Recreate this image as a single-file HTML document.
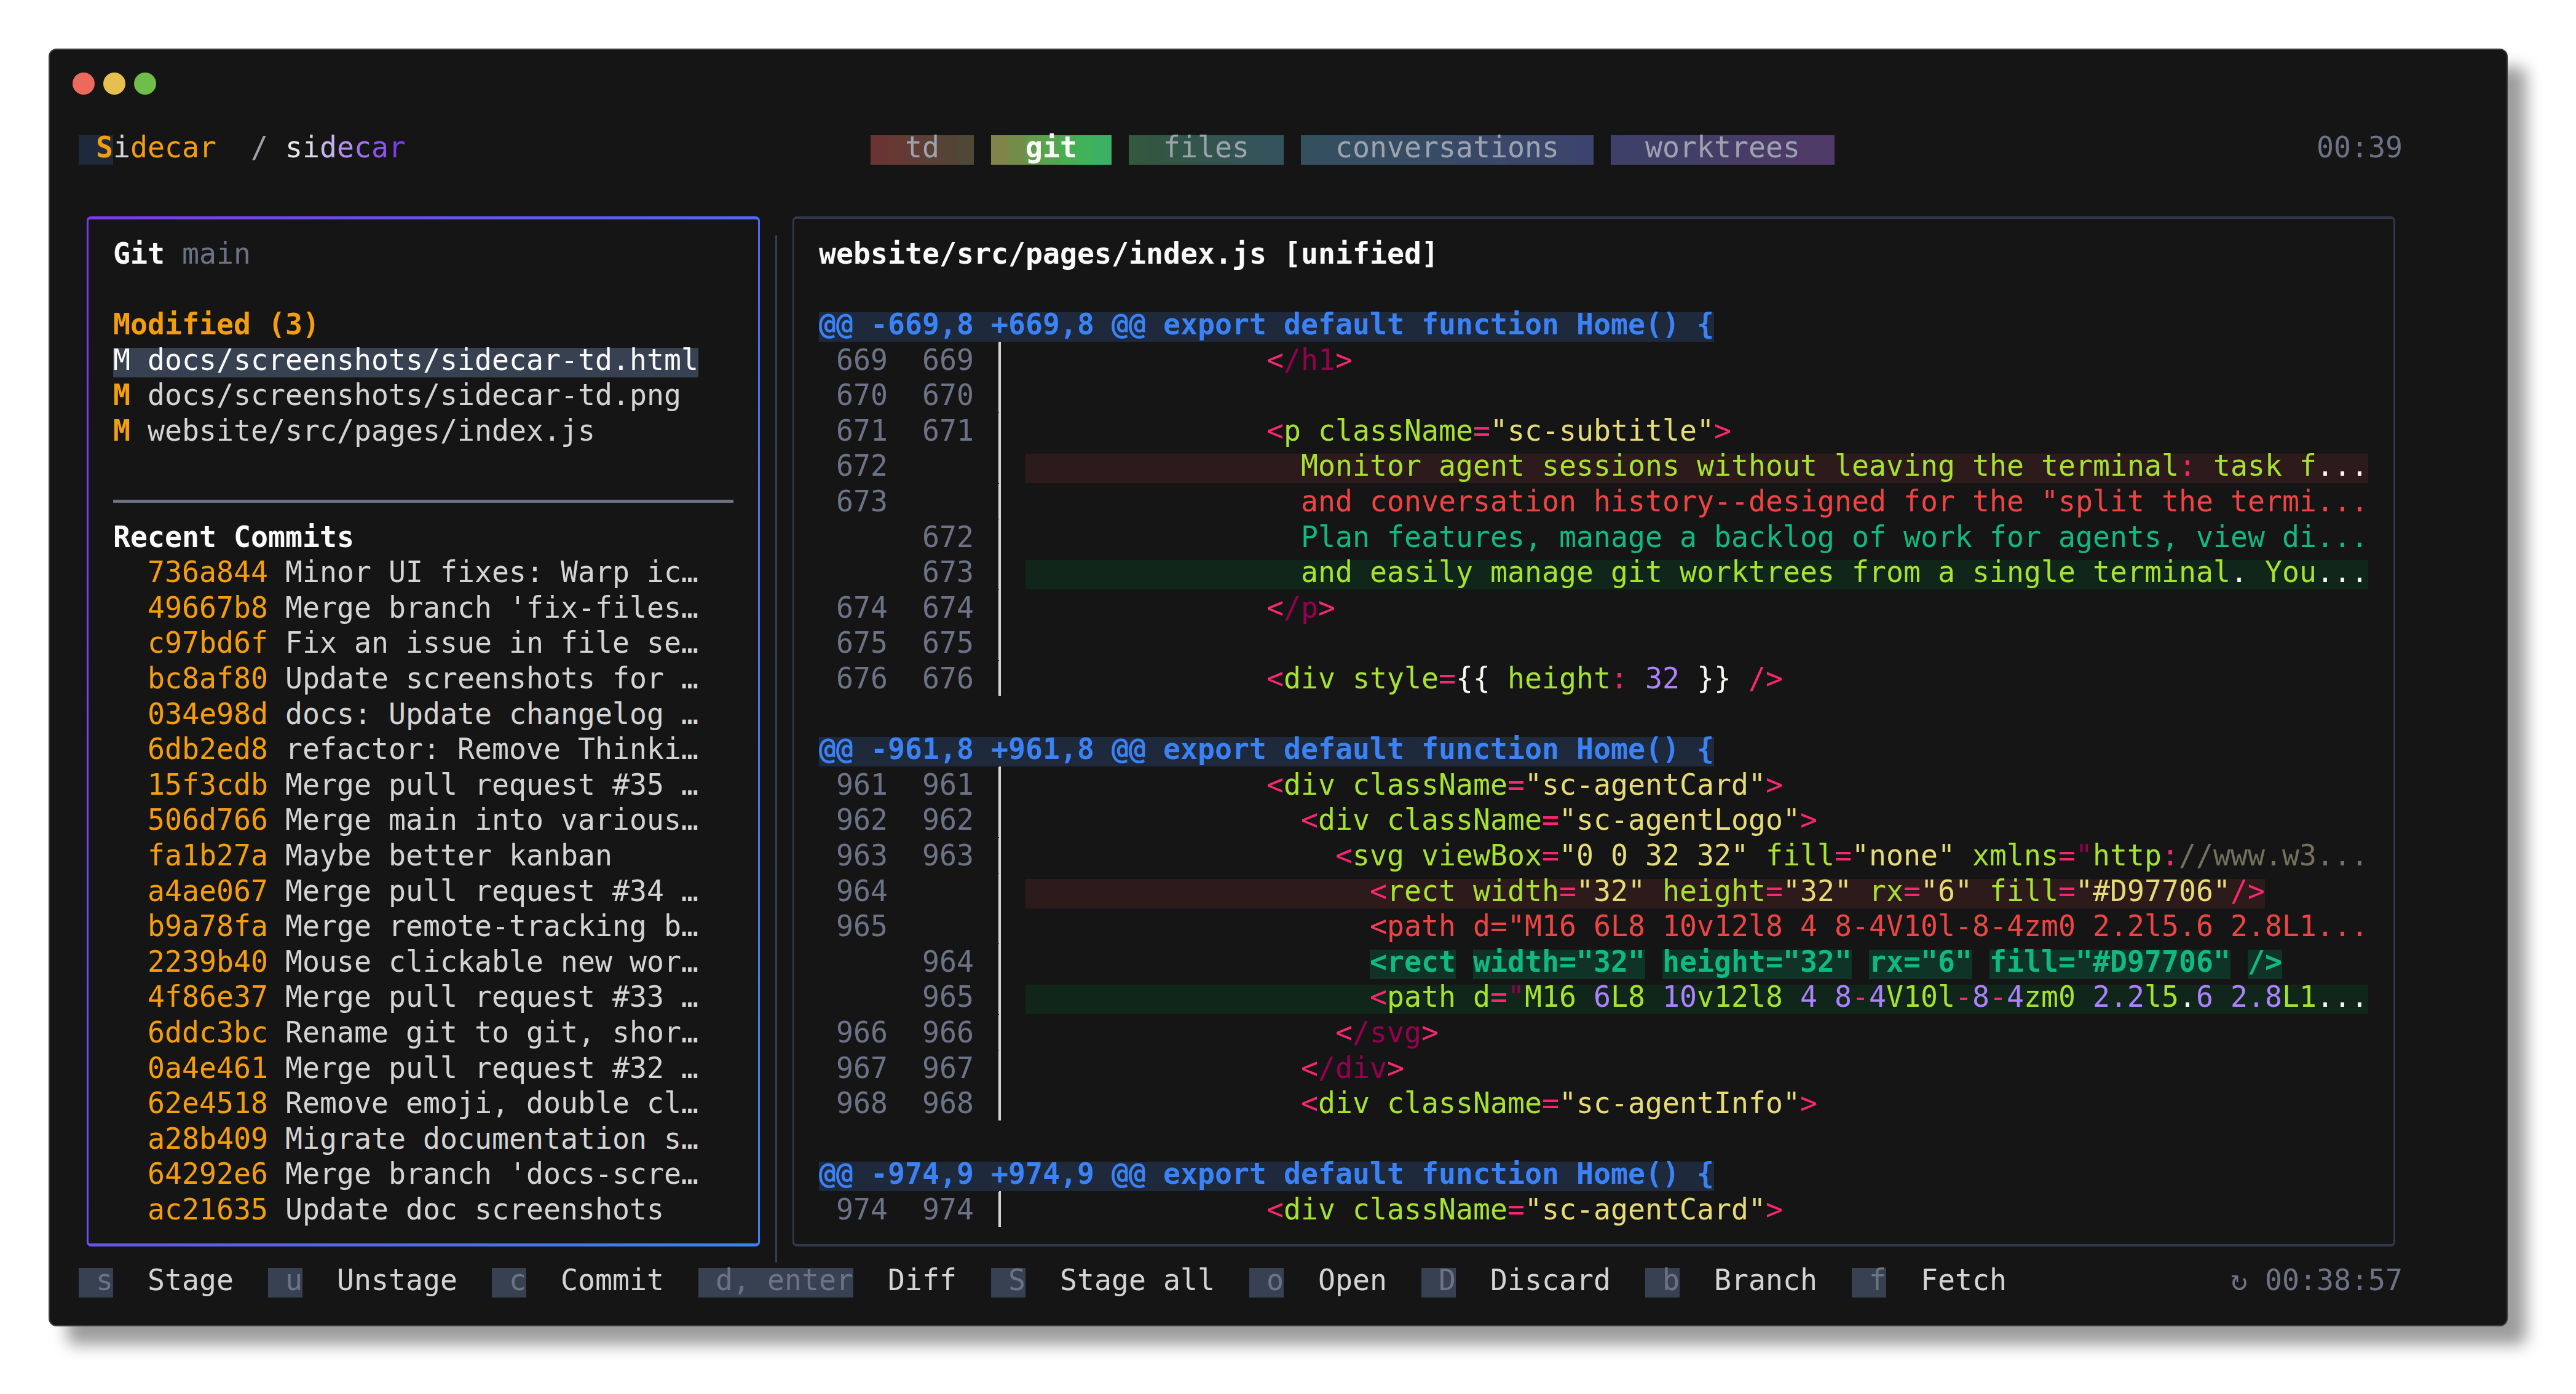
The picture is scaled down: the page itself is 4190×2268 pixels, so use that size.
<!DOCTYPE html>
<html lang="en"><head><meta charset="utf-8"><title>Sidecar — git</title>
<style>
html,body{margin:0;padding:0}
body{width:4190px;height:2268px;background:#fff;position:relative;overflow:hidden;
 font-family:"DejaVu Sans Mono","Liberation Mono",monospace;font-size:48px;color:#d4d4d4;
 -webkit-font-smoothing:antialiased}
.win{position:absolute;left:79px;top:79px;width:4000px;height:2079px;box-sizing:border-box;background:#151515;
 border:2px solid #3a3a3a;border-radius:13px;box-shadow:30px 30px 26px rgba(0,0,0,.39)}
.dot{position:absolute;top:118px;width:36px;height:36px;border-radius:50%}
.r{position:absolute;left:0;height:57.6px;line-height:57.6px;white-space:pre;transform:scaleX(0.96891);transform-origin:0 0}
.r span{position:absolute;top:0;display:block}
.r b{position:absolute;top:0;display:block;font-weight:bold}
i{position:absolute;display:block;height:48px}
.ln{position:absolute;display:block}
.lp{position:absolute;left:140.5px;top:352.05px;width:1095.8px;height:1675.85px;box-sizing:border-box;border-radius:7px;
 background:linear-gradient(110.7deg,#7c3aed,#3b82f6);}
.lp::after{content:"";position:absolute;left:3.7px;top:4.8px;right:3.7px;bottom:4.8px;background:#151515;border-radius:3px}
.rp{position:absolute;left:1288.8px;top:352.05px;width:2607.3px;height:1675.85px;box-sizing:border-box;border-radius:7px;
 border:solid #2f394b;border-width:4.8px 3.6px}
</style></head><body>
<div class="win"></div>
<div class="dot" style="left:118px;background:#ed695e"></div>
<div class="dot" style="left:168px;background:#e5c04f"></div>
<div class="dot" style="left:218px;background:#70be49"></div>
<div class="lp"></div>
<div class="rp"></div>

<div class="ln" style="left:1260.6px;top:383.2px;width:3.6px;height:1670.4px;background:#374151"></div>
<div class="ln" style="left:184px;top:813.3px;width:1009px;height:4.5px;background:#6b7280"></div>
<div class="ln" style="left:1624.6px;top:556px;width:3.7px;height:576px;background:#d4d4d4"></div>
<div class="ln" style="left:1624.6px;top:1247.2px;width:3.7px;height:576px;background:#d4d4d4"></div>
<div class="ln" style="left:1624.6px;top:1938.4px;width:3.7px;height:57.6px;background:#d4d4d4"></div>
<i style="left:128px;top:220px;width:56px;background:#1e293b"></i>
<i style="left:1416px;top:220px;width:28px;background:#6b3434"></i>
<i style="left:1444px;top:220px;width:28px;background:#653834"></i>
<i style="left:1472px;top:220px;width:28px;background:#603c35"></i>
<i style="left:1500px;top:220px;width:28px;background:#5a4035"></i>
<i style="left:1528px;top:220px;width:28px;background:#554436"></i>
<i style="left:1556px;top:220px;width:28px;background:#4f4836"></i>
<i style="left:1612px;top:220px;width:28px;background:#7f8548"></i>
<i style="left:1640px;top:220px;width:28px;background:#738c49"></i>
<i style="left:1668px;top:220px;width:28px;background:#65994b"></i>
<i style="left:1696px;top:220px;width:28px;background:#55a44e"></i>
<i style="left:1724px;top:220px;width:28px;background:#47ae52"></i>
<i style="left:1752px;top:220px;width:28px;background:#40b259"></i>
<i style="left:1780px;top:220px;width:28px;background:#3cb064"></i>
<i style="left:1836px;top:220px;width:28px;background:#33573f"></i>
<i style="left:1864px;top:220px;width:28px;background:#335643"></i>
<i style="left:1892px;top:220px;width:28px;background:#335646"></i>
<i style="left:1920px;top:220px;width:28px;background:#33564a"></i>
<i style="left:1948px;top:220px;width:28px;background:#34554e"></i>
<i style="left:1976px;top:220px;width:28px;background:#345452"></i>
<i style="left:2004px;top:220px;width:28px;background:#345456"></i>
<i style="left:2032px;top:220px;width:28px;background:#345459"></i>
<i style="left:2060px;top:220px;width:28px;background:#34535d"></i>
<i style="left:2116px;top:220px;width:28px;background:#34505f"></i>
<i style="left:2144px;top:220px;width:28px;background:#344f60"></i>
<i style="left:2172px;top:220px;width:28px;background:#354e61"></i>
<i style="left:2200px;top:220px;width:28px;background:#364e62"></i>
<i style="left:2228px;top:220px;width:28px;background:#364d62"></i>
<i style="left:2256px;top:220px;width:28px;background:#364c63"></i>
<i style="left:2284px;top:220px;width:28px;background:#374c64"></i>
<i style="left:2312px;top:220px;width:28px;background:#384b65"></i>
<i style="left:2340px;top:220px;width:28px;background:#384a66"></i>
<i style="left:2368px;top:220px;width:28px;background:#384967"></i>
<i style="left:2396px;top:220px;width:28px;background:#394868"></i>
<i style="left:2424px;top:220px;width:28px;background:#3a4869"></i>
<i style="left:2452px;top:220px;width:28px;background:#3a476a"></i>
<i style="left:2480px;top:220px;width:28px;background:#3a466a"></i>
<i style="left:2508px;top:220px;width:28px;background:#3b466b"></i>
<i style="left:2536px;top:220px;width:28px;background:#3c456c"></i>
<i style="left:2564px;top:220px;width:28px;background:#3c446d"></i>
<i style="left:2620px;top:220px;width:28px;background:#3d4068"></i>
<i style="left:2648px;top:220px;width:28px;background:#3e4068"></i>
<i style="left:2676px;top:220px;width:28px;background:#403f68"></i>
<i style="left:2704px;top:220px;width:28px;background:#413e68"></i>
<i style="left:2732px;top:220px;width:28px;background:#433e67"></i>
<i style="left:2760px;top:220px;width:28px;background:#443e67"></i>
<i style="left:2788px;top:220px;width:28px;background:#463d67"></i>
<i style="left:2816px;top:220px;width:28px;background:#473c67"></i>
<i style="left:2844px;top:220px;width:28px;background:#483c67"></i>
<i style="left:2872px;top:220px;width:28px;background:#4a3c66"></i>
<i style="left:2900px;top:220px;width:28px;background:#4b3b66"></i>
<i style="left:2928px;top:220px;width:28px;background:#4d3a66"></i>
<i style="left:2956px;top:220px;width:28px;background:#4e3a66"></i>
<i style="left:184px;top:565.6px;width:952px;background:#374151"></i>
<i style="left:1332px;top:508px;width:1456px;background:#1e293b"></i>
<i style="left:1668px;top:738.4px;width:2184px;background:#2d1a1a"></i>
<i style="left:1668px;top:911.2px;width:2184px;background:#10261a"></i>
<i style="left:1332px;top:1199.2px;width:1456px;background:#1e293b"></i>
<i style="left:1668px;top:1429.6px;width:2016px;background:#2d1a1a"></i>
<i style="left:2228px;top:1544.8px;width:140px;background:#0f3326"></i>
<i style="left:2396px;top:1544.8px;width:280px;background:#0f3326"></i>
<i style="left:2704px;top:1544.8px;width:308px;background:#0f3326"></i>
<i style="left:3040px;top:1544.8px;width:168px;background:#0f3326"></i>
<i style="left:3236px;top:1544.8px;width:392px;background:#0f3326"></i>
<i style="left:3656px;top:1544.8px;width:56px;background:#0f3326"></i>
<i style="left:1668px;top:1602.4px;width:2184px;background:#10261a"></i>
<i style="left:1332px;top:1890.4px;width:1456px;background:#1e293b"></i>
<i style="left:128px;top:2063.2px;width:56px;background:#374151"></i>
<i style="left:436px;top:2063.2px;width:56px;background:#374151"></i>
<i style="left:800px;top:2063.2px;width:56px;background:#374151"></i>
<i style="left:1136px;top:2063.2px;width:252px;background:#374151"></i>
<i style="left:1612px;top:2063.2px;width:56px;background:#374151"></i>
<i style="left:2032px;top:2063.2px;width:56px;background:#374151"></i>
<i style="left:2312px;top:2063.2px;width:56px;background:#374151"></i>
<i style="left:2676px;top:2063.2px;width:56px;background:#374151"></i>
<i style="left:3012px;top:2063.2px;width:56px;background:#374151"></i>
<div class="r" style="top:210.9px"><span style="left:132.11px;color:#d4d4d4"> </span><b style="left:161.01px;color:#f59e0b">S</b><span style="left:189.9px;color:#d4d4d4">i</span><span style="left:218.8px;color:#f59e0b">decar</span><span style="left:363.29px;color:#d4d4d4">  </span><span style="left:421.09px;color:#9ca3af">/</span><span style="left:449.99px;color:#d4d4d4"> </span><span style="left:478.89px;color:#e8e8e8">s</span><span style="left:507.79px;color:#ded8ea">i</span><span style="left:536.69px;color:#c6b2ea">d</span><span style="left:565.58px;color:#b190ec">e</span><span style="left:594.48px;color:#9f72ee">c</span><span style="left:623.38px;color:#8d55ee">a</span><span style="left:652.28px;color:#7c3aed">r</span><span style="left:1461.44px;color:#9ca3af">  td  </span><b style="left:1663.73px;color:#fafafa">  git  </b><span style="left:1894.91px;color:#9ca3af">  files  </span><span style="left:2183.9px;color:#9ca3af">  conversations  </span><span style="left:2704.07px;color:#9ca3af">  worktrees  </span><span style="left:3888.91px;color:#6d7387">00:39</span></div>
<div class="r" style="top:383.7px"><b style="left:189.9px;color:#fafafa">Git</b><span style="left:276.6px;color:#d4d4d4"> </span><span style="left:305.5px;color:#6d7387">main</span><b style="left:1374.74px;color:#fafafa">website/src/pages/index.js [unified]</b></div>
<div class="r" style="top:498.9px"><b style="left:189.9px;color:#f59e0b">Modified (3)</b><b style="left:1374.74px;color:#3b82f6">@@ -669,8 +669,8 @@ export default function Home() {</b></div>
<div class="r" style="top:556.5px"><span style="left:189.9px;color:#f9fafb">M docs/screenshots/sidecar-td.html</span><span style="left:1403.64px;color:#6d7387">669</span><span style="left:1548.13px;color:#6d7387">669</span><span style="left:1663.73px;color:#d4d4d4">│</span><span style="left:2126.1px;color:#f92672">&lt;</span><span style="left:2155px;color:#960050">/h1</span><span style="left:2241.69px;color:#f92672">&gt;</span></div>
<div class="r" style="top:614.1px"><b style="left:189.9px;color:#f59e0b">M</b><span style="left:218.8px;color:#d4d4d4"> docs/screenshots/sidecar-td.png</span><span style="left:1403.64px;color:#6d7387">670</span><span style="left:1548.13px;color:#6d7387">670</span><span style="left:1663.73px;color:#d4d4d4">│</span></div>
<div class="r" style="top:671.7px"><b style="left:189.9px;color:#f59e0b">M</b><span style="left:218.8px;color:#d4d4d4"> website/src/pages/index.js</span><span style="left:1403.64px;color:#6d7387">671</span><span style="left:1548.13px;color:#6d7387">671</span><span style="left:1663.73px;color:#d4d4d4">│</span><span style="left:2126.1px;color:#f92672">&lt;</span><span style="left:2155px;color:#a6e22e">p className</span><span style="left:2472.88px;color:#f92672">=</span><span style="left:2501.78px;color:#e6db74">"sc-subtitle"</span><span style="left:2877.46px;color:#f92672">&gt;</span></div>
<div class="r" style="top:729.3px"><span style="left:1403.64px;color:#6d7387">672</span><span style="left:1663.73px;color:#d4d4d4">│</span><span style="left:2183.9px;color:#a6e22e">Monitor agent sessions without leaving the terminal</span><span style="left:3657.72px;color:#f92672">:</span><span style="left:3686.62px;color:#a6e22e"> task f</span><span style="left:3888.91px;color:#f8f8f2">...</span></div>
<div class="r" style="top:786.9px"><span style="left:1403.64px;color:#6d7387">673</span><span style="left:1663.73px;color:#d4d4d4">│</span><span style="left:2183.9px;color:#ef4444">and conversation history--designed for the "split the termi...</span></div>
<div class="r" style="top:844.5px"><b style="left:189.9px;color:#fafafa">Recent Commits</b><span style="left:1548.13px;color:#6d7387">672</span><span style="left:1663.73px;color:#d4d4d4">│</span><span style="left:2183.9px;color:#10b981">Plan features, manage a backlog of work for agents, view di...</span></div>
<div class="r" style="top:902.1px"><span style="left:247.7px;color:#f59e0b">736a844</span><span style="left:449.99px;color:#d4d4d4"> </span><span style="left:478.89px;color:#d4d4d4">Minor UI fixes: Warp ic…</span><span style="left:1548.13px;color:#6d7387">673</span><span style="left:1663.73px;color:#d4d4d4">│</span><span style="left:2183.9px;color:#a6e22e">and easily manage git worktrees from a single terminal</span><span style="left:3744.41px;color:#f8f8f2">.</span><span style="left:3773.31px;color:#a6e22e"> You</span><span style="left:3888.91px;color:#f8f8f2">...</span></div>
<div class="r" style="top:959.7px"><span style="left:247.7px;color:#f59e0b">49667b8</span><span style="left:449.99px;color:#d4d4d4"> </span><span style="left:478.89px;color:#d4d4d4">Merge branch 'fix-files…</span><span style="left:1403.64px;color:#6d7387">674</span><span style="left:1548.13px;color:#6d7387">674</span><span style="left:1663.73px;color:#d4d4d4">│</span><span style="left:2126.1px;color:#f92672">&lt;</span><span style="left:2155px;color:#960050">/p</span><span style="left:2212.8px;color:#f92672">&gt;</span></div>
<div class="r" style="top:1017.3px"><span style="left:247.7px;color:#f59e0b">c97bd6f</span><span style="left:449.99px;color:#d4d4d4"> </span><span style="left:478.89px;color:#d4d4d4">Fix an issue in file se…</span><span style="left:1403.64px;color:#6d7387">675</span><span style="left:1548.13px;color:#6d7387">675</span><span style="left:1663.73px;color:#d4d4d4">│</span></div>
<div class="r" style="top:1074.9px"><span style="left:247.7px;color:#f59e0b">bc8af80</span><span style="left:449.99px;color:#d4d4d4"> </span><span style="left:478.89px;color:#d4d4d4">Update screenshots for …</span><span style="left:1403.64px;color:#6d7387">676</span><span style="left:1548.13px;color:#6d7387">676</span><span style="left:1663.73px;color:#d4d4d4">│</span><span style="left:2126.1px;color:#f92672">&lt;</span><span style="left:2155px;color:#a6e22e">div style</span><span style="left:2415.08px;color:#f92672">=</span><span style="left:2443.98px;color:#f8f8f2">{{</span><span style="left:2501.78px;color:#a6e22e"> height</span><span style="left:2704.07px;color:#f92672">:</span><span style="left:2732.97px;color:#ae81ff"> 32</span><span style="left:2819.66px;color:#f8f8f2"> }}</span><span style="left:2906.36px;color:#f92672"> /</span><span style="left:2964.16px;color:#f92672">&gt;</span></div>
<div class="r" style="top:1132.5px"><span style="left:247.7px;color:#f59e0b">034e98d</span><span style="left:449.99px;color:#d4d4d4"> </span><span style="left:478.89px;color:#d4d4d4">docs: Update changelog …</span></div>
<div class="r" style="top:1190.1px"><span style="left:247.7px;color:#f59e0b">6db2ed8</span><span style="left:449.99px;color:#d4d4d4"> </span><span style="left:478.89px;color:#d4d4d4">refactor: Remove Thinki…</span><b style="left:1374.74px;color:#3b82f6">@@ -961,8 +961,8 @@ export default function Home() {</b></div>
<div class="r" style="top:1247.7px"><span style="left:247.7px;color:#f59e0b">15f3cdb</span><span style="left:449.99px;color:#d4d4d4"> </span><span style="left:478.89px;color:#d4d4d4">Merge pull request #35 …</span><span style="left:1403.64px;color:#6d7387">961</span><span style="left:1548.13px;color:#6d7387">961</span><span style="left:1663.73px;color:#d4d4d4">│</span><span style="left:2126.1px;color:#f92672">&lt;</span><span style="left:2155px;color:#a6e22e">div className</span><span style="left:2530.68px;color:#f92672">=</span><span style="left:2559.58px;color:#e6db74">"sc-agentCard"</span><span style="left:2964.16px;color:#f92672">&gt;</span></div>
<div class="r" style="top:1305.3px"><span style="left:247.7px;color:#f59e0b">506d766</span><span style="left:449.99px;color:#d4d4d4"> </span><span style="left:478.89px;color:#d4d4d4">Merge main into various…</span><span style="left:1403.64px;color:#6d7387">962</span><span style="left:1548.13px;color:#6d7387">962</span><span style="left:1663.73px;color:#d4d4d4">│</span><span style="left:2183.9px;color:#f92672">&lt;</span><span style="left:2212.8px;color:#a6e22e">div className</span><span style="left:2588.48px;color:#f92672">=</span><span style="left:2617.37px;color:#e6db74">"sc-agentLogo"</span><span style="left:3021.95px;color:#f92672">&gt;</span></div>
<div class="r" style="top:1362.9px"><span style="left:247.7px;color:#f59e0b">fa1b27a</span><span style="left:449.99px;color:#d4d4d4"> </span><span style="left:478.89px;color:#d4d4d4">Maybe better kanban</span><span style="left:1403.64px;color:#6d7387">963</span><span style="left:1548.13px;color:#6d7387">963</span><span style="left:1663.73px;color:#d4d4d4">│</span><span style="left:2241.69px;color:#f92672">&lt;</span><span style="left:2270.59px;color:#a6e22e">svg viewBox</span><span style="left:2588.48px;color:#f92672">=</span><span style="left:2617.37px;color:#e6db74">"0 0 32 32"</span><span style="left:2935.26px;color:#a6e22e"> fill</span><span style="left:3079.75px;color:#f92672">=</span><span style="left:3108.65px;color:#e6db74">"none"</span><span style="left:3282.04px;color:#a6e22e"> xmlns</span><span style="left:3455.43px;color:#f92672">=</span><span style="left:3484.33px;color:#960050">"</span><span style="left:3513.23px;color:#a6e22e">http</span><span style="left:3628.82px;color:#f92672">:</span><span style="left:3657.72px;color:#75715e">//www.w3...</span></div>
<div class="r" style="top:1420.5px"><span style="left:247.7px;color:#f59e0b">a4ae067</span><span style="left:449.99px;color:#d4d4d4"> </span><span style="left:478.89px;color:#d4d4d4">Merge pull request #34 …</span><span style="left:1403.64px;color:#6d7387">964</span><span style="left:1663.73px;color:#d4d4d4">│</span><span style="left:2299.49px;color:#f92672">&lt;</span><span style="left:2328.39px;color:#a6e22e">rect width</span><span style="left:2617.37px;color:#f92672">=</span><span style="left:2646.27px;color:#e6db74">"32"</span><span style="left:2761.87px;color:#a6e22e"> height</span><span style="left:2964.16px;color:#f92672">=</span><span style="left:2993.05px;color:#e6db74">"32"</span><span style="left:3108.65px;color:#a6e22e"> rx</span><span style="left:3195.34px;color:#f92672">=</span><span style="left:3224.24px;color:#e6db74">"6"</span><span style="left:3310.94px;color:#a6e22e"> fill</span><span style="left:3455.43px;color:#f92672">=</span><span style="left:3484.33px;color:#e6db74">"#D97706"</span><span style="left:3744.41px;color:#f92672">/</span><span style="left:3773.31px;color:#f92672">&gt;</span></div>
<div class="r" style="top:1478.1px"><span style="left:247.7px;color:#f59e0b">b9a78fa</span><span style="left:449.99px;color:#d4d4d4"> </span><span style="left:478.89px;color:#d4d4d4">Merge remote-tracking b…</span><span style="left:1403.64px;color:#6d7387">965</span><span style="left:1663.73px;color:#d4d4d4">│</span><span style="left:2299.49px;color:#f43f5e">&lt;</span><span style="left:2328.39px;color:#ef4444">path d="M16 6L8 10v12l8 4 8-4V10l-8-4zm0 2.2l5.6 2.8L1...</span></div>
<div class="r" style="top:1535.7px"><span style="left:247.7px;color:#f59e0b">2239b40</span><span style="left:449.99px;color:#d4d4d4"> </span><span style="left:478.89px;color:#d4d4d4">Mouse clickable new wor…</span><span style="left:1548.13px;color:#6d7387">964</span><span style="left:1663.73px;color:#d4d4d4">│</span><b style="left:2299.49px;color:#10b981">&lt;rect</b><b style="left:2472.88px;color:#10b981">width="32"</b><b style="left:2790.76px;color:#10b981">height="32"</b><b style="left:3137.55px;color:#10b981">rx="6"</b><b style="left:3339.84px;color:#10b981">fill="#D97706"</b><b style="left:3773.31px;color:#10b981">/&gt;</b></div>
<div class="r" style="top:1593.3px"><span style="left:247.7px;color:#f59e0b">4f86e37</span><span style="left:449.99px;color:#d4d4d4"> </span><span style="left:478.89px;color:#d4d4d4">Merge pull request #33 …</span><span style="left:1548.13px;color:#6d7387">965</span><span style="left:1663.73px;color:#d4d4d4">│</span><span style="left:2299.49px;color:#f92672">&lt;</span><span style="left:2328.39px;color:#a6e22e">path d</span><span style="left:2501.78px;color:#f92672">=</span><span style="left:2530.68px;color:#960050">"</span><span style="left:2559.58px;color:#a6e22e">M16</span><span style="left:2646.27px;color:#ae81ff"> 6</span><span style="left:2704.07px;color:#a6e22e">L8</span><span style="left:2761.87px;color:#ae81ff"> 10</span><span style="left:2848.56px;color:#a6e22e">v12l8</span><span style="left:2993.05px;color:#ae81ff"> 4 8</span><span style="left:3108.65px;color:#f92672">-</span><span style="left:3137.55px;color:#ae81ff">4</span><span style="left:3166.44px;color:#a6e22e">V10l</span><span style="left:3282.04px;color:#f92672">-</span><span style="left:3310.94px;color:#ae81ff">8</span><span style="left:3339.84px;color:#f92672">-</span><span style="left:3368.73px;color:#ae81ff">4</span><span style="left:3397.63px;color:#a6e22e">zm0</span><span style="left:3484.33px;color:#ae81ff"> 2.2</span><span style="left:3599.92px;color:#a6e22e">l5</span><span style="left:3657.72px;color:#f8f8f2">.</span><span style="left:3686.62px;color:#ae81ff">6 2.8</span><span style="left:3831.11px;color:#a6e22e">L1</span><span style="left:3888.91px;color:#f8f8f2">...</span></div>
<div class="r" style="top:1650.9px"><span style="left:247.7px;color:#f59e0b">6ddc3bc</span><span style="left:449.99px;color:#d4d4d4"> </span><span style="left:478.89px;color:#d4d4d4">Rename git to git, shor…</span><span style="left:1403.64px;color:#6d7387">966</span><span style="left:1548.13px;color:#6d7387">966</span><span style="left:1663.73px;color:#d4d4d4">│</span><span style="left:2241.69px;color:#f92672">&lt;</span><span style="left:2270.59px;color:#960050">/svg</span><span style="left:2386.19px;color:#f92672">&gt;</span></div>
<div class="r" style="top:1708.5px"><span style="left:247.7px;color:#f59e0b">0a4e461</span><span style="left:449.99px;color:#d4d4d4"> </span><span style="left:478.89px;color:#d4d4d4">Merge pull request #32 …</span><span style="left:1403.64px;color:#6d7387">967</span><span style="left:1548.13px;color:#6d7387">967</span><span style="left:1663.73px;color:#d4d4d4">│</span><span style="left:2183.9px;color:#f92672">&lt;</span><span style="left:2212.8px;color:#960050">/div</span><span style="left:2328.39px;color:#f92672">&gt;</span></div>
<div class="r" style="top:1766.1px"><span style="left:247.7px;color:#f59e0b">62e4518</span><span style="left:449.99px;color:#d4d4d4"> </span><span style="left:478.89px;color:#d4d4d4">Remove emoji, double cl…</span><span style="left:1403.64px;color:#6d7387">968</span><span style="left:1548.13px;color:#6d7387">968</span><span style="left:1663.73px;color:#d4d4d4">│</span><span style="left:2183.9px;color:#f92672">&lt;</span><span style="left:2212.8px;color:#a6e22e">div className</span><span style="left:2588.48px;color:#f92672">=</span><span style="left:2617.37px;color:#e6db74">"sc-agentInfo"</span><span style="left:3021.95px;color:#f92672">&gt;</span></div>
<div class="r" style="top:1823.7px"><span style="left:247.7px;color:#f59e0b">a28b409</span><span style="left:449.99px;color:#d4d4d4"> </span><span style="left:478.89px;color:#d4d4d4">Migrate documentation s…</span></div>
<div class="r" style="top:1881.3px"><span style="left:247.7px;color:#f59e0b">64292e6</span><span style="left:449.99px;color:#d4d4d4"> </span><span style="left:478.89px;color:#d4d4d4">Merge branch 'docs-scre…</span><b style="left:1374.74px;color:#3b82f6">@@ -974,9 +974,9 @@ export default function Home() {</b></div>
<div class="r" style="top:1938.9px"><span style="left:247.7px;color:#f59e0b">ac21635</span><span style="left:449.99px;color:#d4d4d4"> </span><span style="left:478.89px;color:#d4d4d4">Update doc screenshots</span><span style="left:1403.64px;color:#6d7387">974</span><span style="left:1548.13px;color:#6d7387">974</span><span style="left:1663.73px;color:#d4d4d4">│</span><span style="left:2126.1px;color:#f92672">&lt;</span><span style="left:2155px;color:#a6e22e">div className</span><span style="left:2530.68px;color:#f92672">=</span><span style="left:2559.58px;color:#e6db74">"sc-agentCard"</span><span style="left:2964.16px;color:#f92672">&gt;</span></div>
<div class="r" style="top:2054.1px"><span style="left:132.11px;color:#6d7387"> s</span><span style="left:247.7px;color:#d4d4d4">Stage</span><span style="left:449.99px;color:#6d7387"> u</span><span style="left:565.58px;color:#d4d4d4">Unstage</span><span style="left:825.67px;color:#6d7387"> c</span><span style="left:941.26px;color:#d4d4d4">Commit</span><span style="left:1172.45px;color:#6d7387"> d, enter</span><span style="left:1490.33px;color:#d4d4d4">Diff</span><span style="left:1663.73px;color:#6d7387"> S</span><span style="left:1779.32px;color:#d4d4d4">Stage all</span><span style="left:2097.2px;color:#6d7387"> o</span><span style="left:2212.8px;color:#d4d4d4">Open</span><span style="left:2386.19px;color:#6d7387"> D</span><span style="left:2501.78px;color:#d4d4d4">Discard</span><span style="left:2761.87px;color:#6d7387"> b</span><span style="left:2877.46px;color:#d4d4d4">Branch</span><span style="left:3108.65px;color:#6d7387"> f</span><span style="left:3224.24px;color:#d4d4d4">Fetch</span><span style="left:3744.41px;color:#6d7387">↻ 00:38:57</span></div>
</body></html>
